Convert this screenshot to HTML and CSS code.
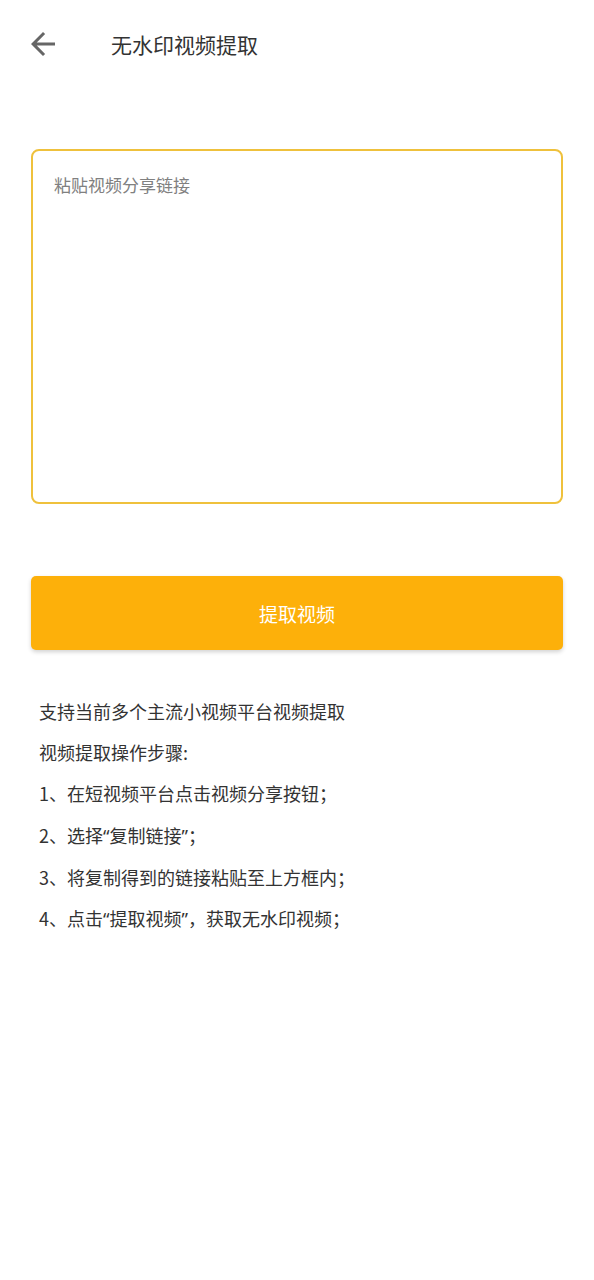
FILE: index.html
```html
<!DOCTYPE html>
<html lang="zh">
<head>
<meta charset="utf-8">
<title>无水印视频提取</title>
<link rel="stylesheet" href="styles.css">
</head>
<body>
<header class="topbar">
  <svg class="back" viewBox="0 0 24 24" width="36" height="36"><path d="M20 11H7.83l5.59-5.59L12 4l-8 8 8 8 1.41-1.41L7.83 13H20v-2z" fill="#666"/></svg>
  <h1 class="title">无水印视频提取</h1>
</header>
<main class="content">
  <div class="input-box"><span class="placeholder">粘贴视频分享链接</span></div>
  <button class="extract-btn">提取视频</button>
  <div class="tips">
    <p>支持当前多个主流小视频平台视频提取</p>
    <p>视频提取操作步骤:</p>
    <p>1、在短视频平台点击视频分享按钮；</p>
    <p>2、选择<span class="q">“</span>复制链接<span class="q">”</span>；</p>
    <p>3、将复制得到的链接粘贴至上方框内；</p>
    <p>4、点击<span class="q">“</span>提取视频<span class="q">”</span>，获取无水印视频；</p>
  </div>
</main>
</body>
</html>
```

FILE: styles.css
```css
html, body {
  margin: 0;
  padding: 0;
  background: #ffffff;
  font-family: "Noto Sans CJK SC", "Noto Sans", sans-serif;
}
.topbar {
  height: 88px;
  display: flex;
  align-items: center;
  padding-left: 25px;
}
.back {
  display: block;
  flex: none;
}
.title {
  margin: 0 0 0 50px;
  font-size: 21px;
  font-weight: 400;
  color: #333333;
  line-height: 1;
}
.content {
  padding: 0 31px;
}
.input-box {
  box-sizing: border-box;
  margin-top: 61px;
  height: 355px;
  border: 2px solid #efc13c;
  border-radius: 8px;
  padding: 22px 0 0 21px;
}
.placeholder {
  display: block;
  font-size: 17px;
  line-height: 24px;
  color: #808080;
}
.extract-btn {
  display: block;
  width: 100%;
  margin-top: 72px;
  height: 74px;
  border: none;
  border-radius: 5px;
  background: #fdb00a;
  color: #ffffff;
  font-family: "Noto Sans CJK SC", "Noto Sans", sans-serif;
  font-size: 19px;
  box-shadow: 0 2px 4px rgba(0,0,0,0.18);
}
.tips {
  margin-top: 41px;
  padding-left: 8px;
}
.tips p {
  margin: 0;
  font-size: 18px;
  line-height: 41.2px;
  color: #333333;
}
.q {
  font-family: "Noto Sans", "Roboto", sans-serif;
}
```
